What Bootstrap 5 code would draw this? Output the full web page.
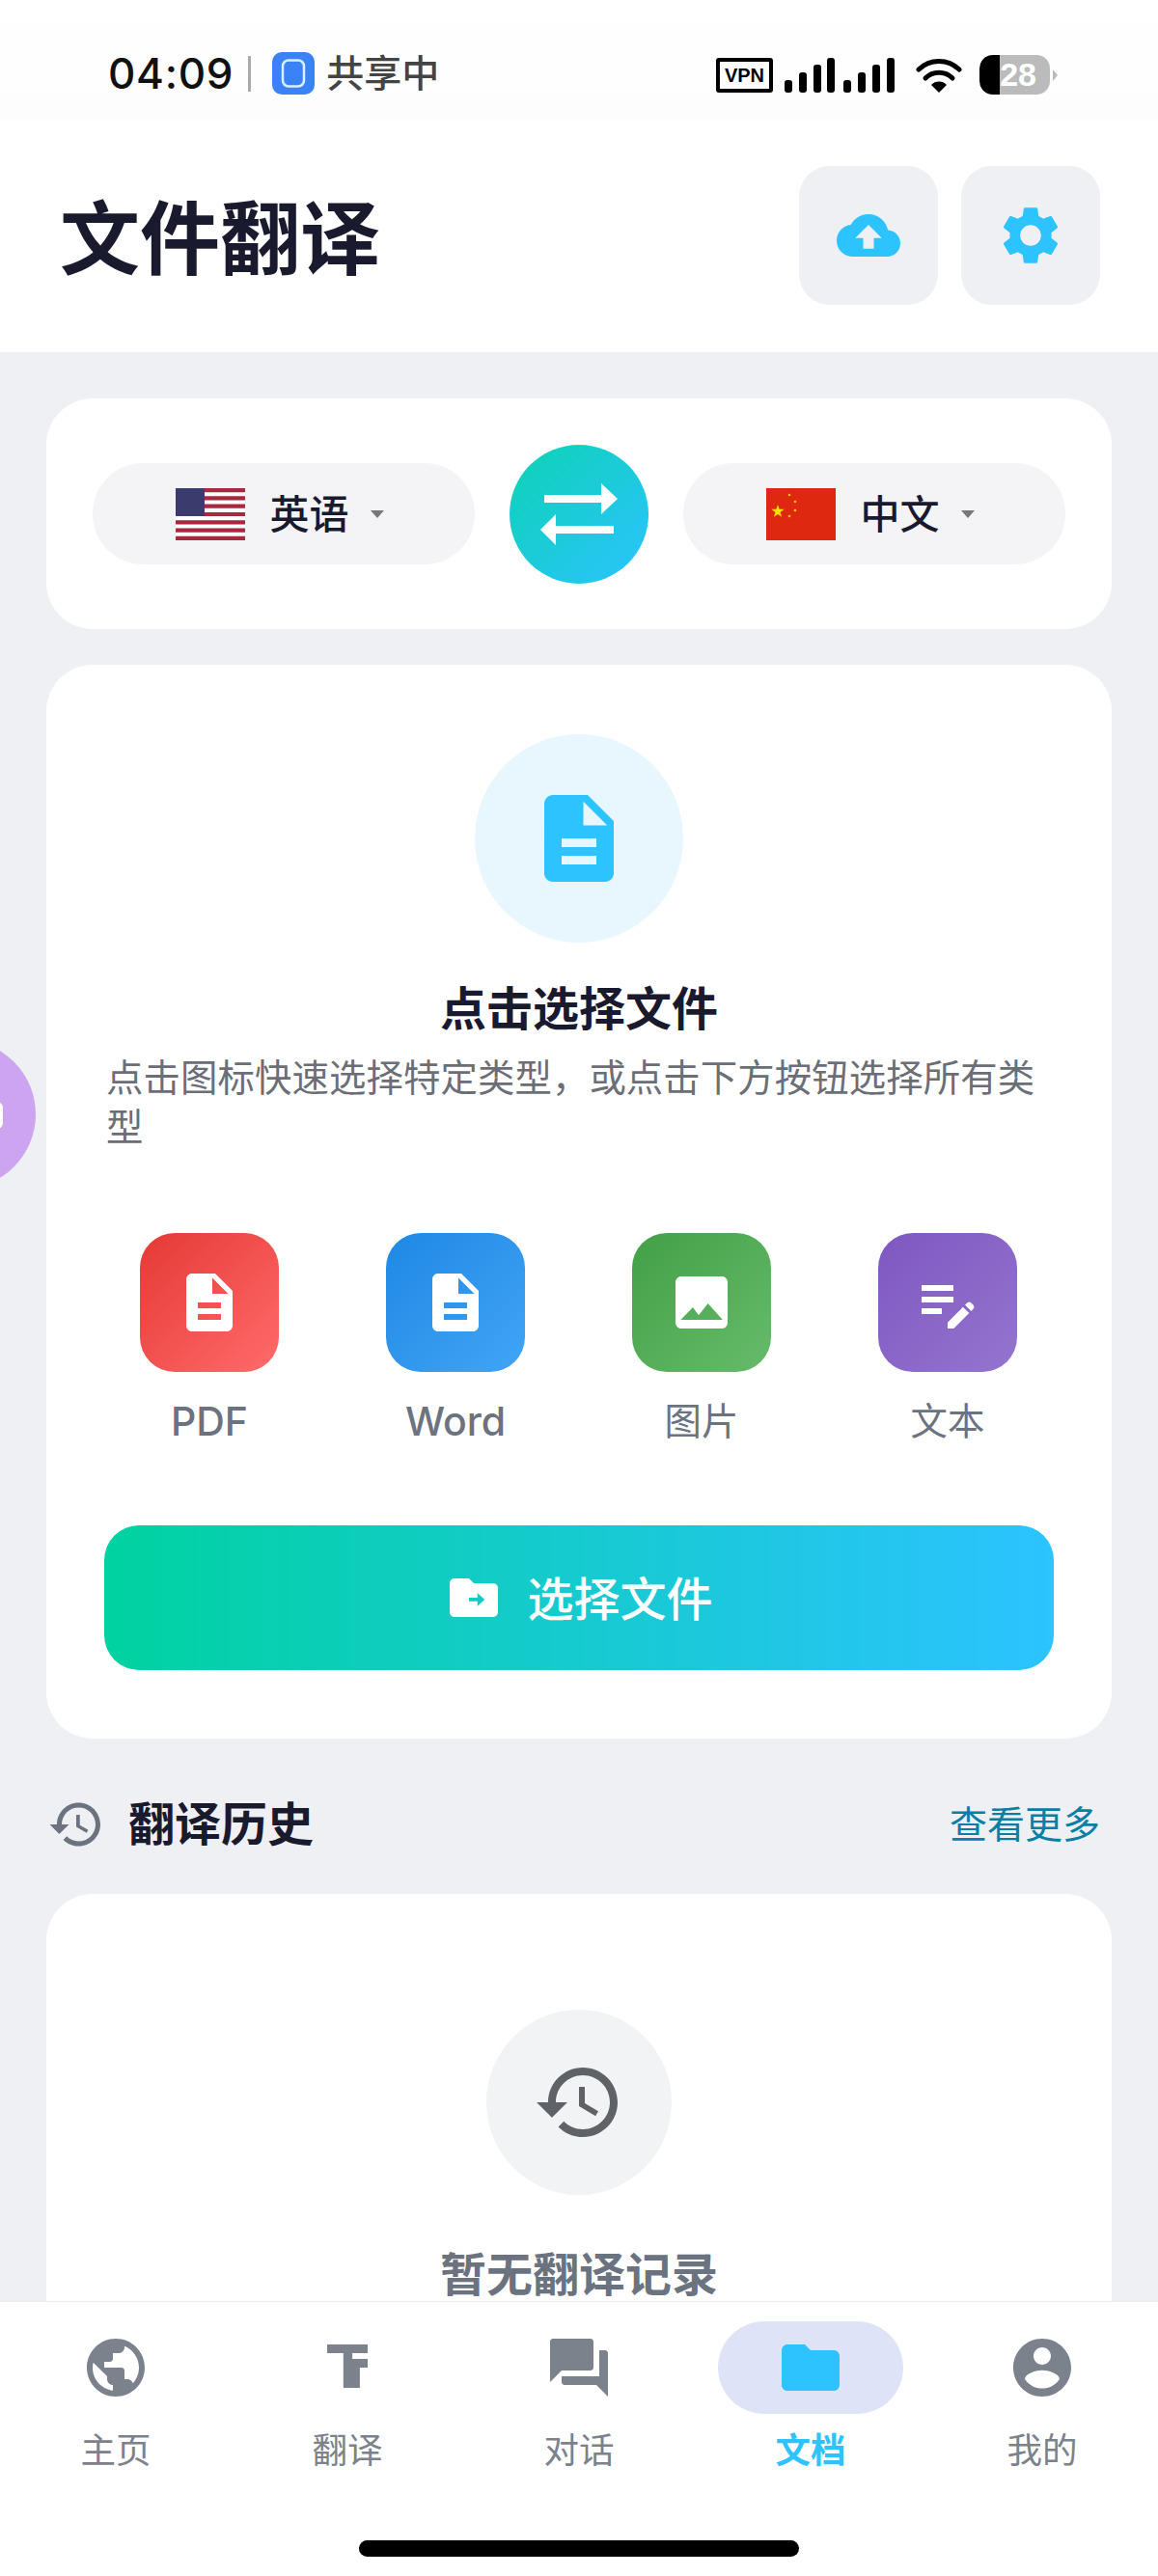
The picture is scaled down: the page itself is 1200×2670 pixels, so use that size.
<!DOCTYPE html>
<html lang="zh">
  <head>
    <meta charset="UTF-8" />
    <title>文件翻译</title>
    <link rel="stylesheet" href="https://cdn.jsdelivr.net/npm/bootstrap@5.3.3/dist/css/bootstrap.min.css" />
    <script src="https://cdn.jsdelivr.net/npm/bootstrap@5.3.3/dist/js/bootstrap.bundle.min.js"></script>
    <style>
      html { overflow: hidden; }
      body {
        width: 1200px;
        height: 2670px;
        overflow: hidden;
        background: #eef0f4;
        font-family: Inter, Roboto, "Noto Sans CJK SC", sans-serif;
        color: #1a1a2e;
      }
      svg { display: block; flex: none; fill: currentColor; }
      .status-bar { height: 124px; padding: 54px 104px 0 112px; background: linear-gradient(#fff, #fdfdfd); color: #000; }
      .status-right { margin-top: 3px; }
      .status-time { font-size: 44px; line-height: 44px; font-weight: 500; color: #111; letter-spacing: .7px; }
      .status-sep { width: 3px; height: 37px; background: #aaa; margin: 0 22px 0 15px; }
      .status-share { font-size: 39px; line-height: 44px; color: #444; margin-left: 12px; font-weight: 500; }
      .vpn-box { width: 59px; height: 36px; border: 4px solid #000; border-radius: 3px; font: 700 20px/28px "Liberation Sans", sans-serif; text-align: center; }
      .signal-bars { margin-left: 12px; }
      .wifi-mark { margin-left: 22px; }
      .batt-wrap { margin-left: 18px; }
      .batt-box { width: 73px; height: 41px; border-radius: 14px; background: linear-gradient(90deg, #000 0 29%, #bbb 29%); color: #fff; font: 700 34px/41px "Liberation Sans", sans-serif; text-align: right; padding-right: 14px; }
      .batt-nub { width: 0; height: 0; border-left: 5px solid #bbb; border-top: 6px solid transparent; border-bottom: 6px solid transparent; margin-left: 3px; }

      .page-head { height: 241px; background: #fff; padding: 48px 60px 0 62px; }
      .page-title { font-size: 83px; line-height: 152px; font-weight: 700; margin: 0; }
      .head-btn { width: 144px; height: 144px; border-radius: 32px; background: #eef0f4; color: #2cc3ff; }

      .sheet { background: #fff; border-radius: 48px; margin: 0 48px; }
      .lang-sheet { height: 239px; margin-top: 48px; padding: 0 48px; gap: 36px; }
      .lang-pill { width: 396px; height: 105px; border-radius: 52px; background: #f4f4f6; font-size: 41px; font-weight: 500; padding-right: 9px; }
      .lang-flag { margin-right: 26px; }
      .lang-name { padding-top: 2px; }
      .lang-caret { width: 0; height: 0; border-left: 7px solid transparent; border-right: 7px solid transparent; border-top: 8px solid #777; margin-left: 22px; }
      .swap-btn { width: 144px; height: 144px; border-radius: 50%; background: linear-gradient(135deg, #0cd3b4, #2cc3ff); color: #fff; }

      .pick-sheet { margin-top: 37px; height: 1113px; padding: 72px 60px 0; }
      .pick-circle { width: 216px; height: 216px; border-radius: 50%; background: #e8f7fd; color: #2cc3ff; margin: 0 auto; }
      .pick-title { font-size: 48px; line-height: 60px; font-weight: 600; text-align: center; margin: 39px 0 0; }
      .pick-desc { font-size: 38.4px; line-height: 51px; color: #6b6e76; margin: 16px 0 0 2px; letter-spacing: .1px; }
      .type-row { margin-top: 84px; padding: 0 38px 0 37px; }
      .type-item { width: 144px; }
      .type-tile { width: 144px; height: 144px; border-radius: 36px; color: #fff; }
      .tile-red { background: linear-gradient(135deg, #e53935, #ff6b6b); }
      .tile-blue { background: linear-gradient(135deg, #1e88e5, #42a5f5); }
      .tile-green { background: linear-gradient(135deg, #43a047, #66bb6a); }
      .tile-purple { background: linear-gradient(135deg, #7e57c2, #9575cd); }
      .type-label { font-size: 38.4px; line-height: 52px; color: #6b7280; margin-top: 25px; white-space: nowrap; }
      .type-label-latin { font-size: 41px; font-weight: 500; }
      .pick-btn { width: 984px; height: 150px; border: 0; border-radius: 36px; margin: 82px 0 0 0; background: linear-gradient(90deg, #00d2a0, #2cc3ff); color: #fff; font-size: 48px; font-weight: 500; gap: 25px; }
      .pick-btn:hover { color: #fff; background: linear-gradient(90deg, #00d2a0, #2cc3ff); }
      .pick-btn-text { padding-top: 3px; }

      .hist-head { margin: 59px 60px 0 49px; height: 60px; }
      .hist-icon { color: #6b7280; }
      .hist-title { font-size: 48px; font-weight: 600; line-height: 60px; margin: 0 0 0 24px; }
      .hist-more { font-size: 39px; color: #0a7ea4; text-decoration: none; }
      .empty-sheet { margin-top: 42px; height: 700px; padding-top: 120px; }
      .empty-circle { width: 192px; height: 192px; border-radius: 50%; background: #f1f3f5; color: #5f6368; margin: 0 auto; }
      .empty-text { font-size: 48px; font-weight: 600; color: #6b7280; text-align: center; line-height: 60px; margin: 53px 0 0; }

      .tab-bar { position: fixed; left: 0; right: 0; bottom: 0; height: 285px; background: #fff; border-top: 1px solid #e9eaec; padding-top: 20px; }
      .tab-cell { width: 240px; color: #7b828c; }
      .tab-pill { width: 192px; height: 96px; border-radius: 48px; }
      .tab-cell.is-on { color: #2cc3ff; font-weight: 700; }
      .is-on .tab-pill { background: #dfe3f7; }
      .tab-text { font-size: 36.5px; line-height: 46px; margin-top: 15px; }
      .home-bar { position: absolute; left: 372px; bottom: 20px; width: 456px; height: 17px; border-radius: 9px; background: #000; }
      .float-ball { position: fixed; left: -117px; top: 1078px; width: 154px; height: 154px; border-radius: 50%; background: #cda4f0; }
      .float-glyph { position: absolute; right: 34px; top: 64px; width: 30px; height: 28px; border-radius: 6px; background: #fff; }
    </style>
  </head>
  <body>
    <div class="status-bar d-flex align-items-start justify-content-between">
      <div class="d-flex align-items-center">
        <span class="status-time">04:09</span>
        <span class="status-sep"></span>
        <svg width="44" height="44" viewBox="0 0 44 44"><rect width="44" height="44" rx="10" fill="#3b82f6"/><rect x="11" y="8.500" width="22" height="27" rx="6" fill="#3b82f6" stroke="#d8f0ff" stroke-width="2.500"/></svg>
        <span class="status-share">共享中</span>
      </div>
      <div class="status-right d-flex align-items-center">
        <div class="vpn-box">VPN</div>
        <svg class="signal-bars" width="114" height="36" viewBox="0 0 114 36"><rect x="0" y="23" width="8" height="13" rx="3"/><rect x="15" y="15" width="8" height="21" rx="3"/><rect x="30" y="7" width="8" height="29" rx="3"/><rect x="44" y="0" width="8" height="36" rx="3"/><rect x="61" y="23" width="8" height="13" rx="3"/><rect x="76" y="15" width="8" height="21" rx="3"/><rect x="91" y="7" width="8" height="29" rx="3"/><rect x="106" y="0" width="8" height="36" rx="3"/></svg>
        <svg class="wifi-mark" width="48" height="36" viewBox="0 0 48 36"><path d="M24 36l-8-8a11 11 0 0 1 16 0z"/><path d="M10 21a20 20 0 0 1 28 0" fill="none" stroke="#000" stroke-width="5" stroke-linecap="round"/><path d="M3 12a30 30 0 0 1 42 0" fill="none" stroke="#000" stroke-width="5" stroke-linecap="round"/></svg>
        <div class="batt-wrap d-flex align-items-center">
          <div class="batt-box">28</div>
          <div class="batt-nub"></div>
        </div>
      </div>
    </div>

    <header class="page-head d-flex justify-content-between align-items-start">
      <h1 class="page-title">文件翻译</h1>
      <div class="d-flex gap-4">
        <div class="head-btn d-flex align-items-center justify-content-center">
          <svg width="66" height="66" viewBox="0 0 24 24"><path d="M19.35 10.04C18.67 6.59 15.64 4 12 4 9.11 4 6.6 5.64 5.35 8.04 2.34 8.36 0 10.91 0 14c0 3.31 2.69 6 6 6h13c2.76 0 5-2.24 5-5 0-2.64-2.05-4.78-4.65-4.96zM14 13v4h-4v-4H7l5-5 5 5h-3z"/></svg>
        </div>
        <div class="head-btn d-flex align-items-center justify-content-center">
          <svg width="72" height="72" viewBox="0 0 24 24"><path d="M19.14 12.94c.04-.3.06-.61.06-.94 0-.32-.02-.64-.07-.94l2.03-1.58c.18-.14.23-.41.12-.61l-1.92-3.32c-.12-.22-.37-.29-.59-.22l-2.39.96c-.5-.38-1.03-.7-1.62-.94l-.36-2.54c-.04-.24-.24-.41-.48-.41h-3.84c-.24 0-.43.17-.47.41l-.36 2.54c-.59.24-1.13.57-1.62.94l-2.39-.96c-.22-.08-.47 0-.59.22L2.74 8.87c-.12.21-.08.47.12.61l2.03 1.58c-.05.3-.09.63-.09.94s.02.64.07.94l-2.03 1.58c-.18.14-.23.41-.12.61l1.92 3.32c.12.22.37.29.59.22l2.39-.96c.5.38 1.03.7 1.62.94l.36 2.54c.05.24.24.41.48.41h3.84c.24 0 .44-.17.47-.41l.36-2.54c.59-.24 1.13-.56 1.62-.94l2.39.96c.22.08.47 0 .59-.22l1.92-3.32c.12-.22.07-.47-.12-.61l-2.01-1.58zM12 15.6c-1.98 0-3.6-1.62-3.6-3.6s1.62-3.6 3.6-3.6 3.6 1.62 3.6 3.6-1.62 3.6-3.6 3.6z"/></svg>
        </div>
      </div>
    </header>

    <section class="sheet lang-sheet d-flex align-items-center">
      <div class="lang-pill d-flex align-items-center justify-content-center">
        <svg class="lang-flag" width="72" height="54" viewBox="0 0 72 54">
          <rect width="72" height="54" fill="#fff"/>
          <path d="M0 0h72v4.200H0zM0 8.300h72v4.200H0zM0 16.600h72v4.200H0zM0 24.900h72v4.200H0zM0 33.200h72v4.200H0zM0 41.500h72v4.200H0zM0 49.800h72V54H0z" fill="#a8283e"/>
          <rect width="30" height="29" fill="#3c3b6e"/>
        </svg>
        <span class="lang-name">英语</span><span class="lang-caret"></span>
      </div>
      <button class="swap-btn btn p-0 d-flex align-items-center justify-content-center">
        <svg width="80" height="64" viewBox="0 0 80 64"><path d="M4 12h59V0l17 16-17 16V20H4z"/><path d="M76 44H16V32L0 48l16 16V52h60z"/></svg>
      </button>
      <div class="lang-pill d-flex align-items-center justify-content-center">
        <svg class="lang-flag" width="72" height="54" viewBox="0 0 72 54">
          <rect width="72" height="54" fill="#de2910"/>
          <polygon points="12,17 13.600,21.800 18.700,21.800 14.500,25 16.100,29.700 12,26.900 7.900,29.700 9.500,25 5.300,21.800 10.400,21.800" fill="#ffde00"/>
          <g fill="#ffc400"><circle cx="24" cy="7" r="1.300"/><circle cx="30" cy="14" r="1.300"/><circle cx="30" cy="23" r="1.300"/><circle cx="24" cy="29" r="1.300"/></g>
        </svg>
        <span class="lang-name">中文</span><span class="lang-caret"></span>
      </div>
    </section>

    <section class="sheet pick-sheet">
      <div class="pick-circle d-flex align-items-center justify-content-center">
        <svg width="108" height="108" viewBox="0 0 24 24"><path d="M14 2H6c-1.100 0-1.990.9-1.990 2L4 20c0 1.100.89 2 1.990 2H18c1.100 0 2-.9 2-2V8l-6-6zm2 16H8v-2h8v2zm0-4H8v-2h8v2zm-3-5V3.500L18.500 9H13z"/></svg>
      </div>
      <h2 class="pick-title">点击选择文件</h2>
      <p class="pick-desc">点击图标快速选择特定类型，或点击下方按钮选择所有类型</p>
      <div class="type-row d-flex justify-content-between">
        <div class="type-item d-flex flex-column align-items-center">
          <div class="type-tile tile-red d-flex align-items-center justify-content-center">
            <svg width="72" height="72" viewBox="0 0 24 24"><path d="M14 2H6c-1.100 0-1.990.9-1.990 2L4 20c0 1.100.89 2 1.990 2H18c1.100 0 2-.9 2-2V8l-6-6zm2 16H8v-2h8v2zm0-4H8v-2h8v2zm-3-5V3.500L18.500 9H13z"/></svg>
          </div>
          <span class="type-label type-label-latin">PDF</span>
        </div>
        <div class="type-item d-flex flex-column align-items-center">
          <div class="type-tile tile-blue d-flex align-items-center justify-content-center">
            <svg width="72" height="72" viewBox="0 0 24 24"><path d="M14 2H6c-1.100 0-1.990.9-1.990 2L4 20c0 1.100.89 2 1.990 2H18c1.100 0 2-.9 2-2V8l-6-6zm2 16H8v-2h8v2zm0-4H8v-2h8v2zm-3-5V3.500L18.500 9H13z"/></svg>
          </div>
          <span class="type-label type-label-latin">Word</span>
        </div>
        <div class="type-item d-flex flex-column align-items-center">
          <div class="type-tile tile-green d-flex align-items-center justify-content-center">
            <svg width="72" height="72" viewBox="0 0 24 24"><path fill-rule="evenodd" d="M5 3h14c1.100 0 2 .9 2 2v14c0 1.100-.9 2-2 2H5c-1.100 0-2-.9-2-2V5c0-1.100.9-2 2-2zM4.800 18L9 13.700l2 2.700 3.200-4.100 5.100 5.700z"/></svg>
          </div>
          <span class="type-label">图片</span>
        </div>
        <div class="type-item d-flex flex-column align-items-center">
          <div class="type-tile tile-purple d-flex align-items-center justify-content-center">
            <svg width="72" height="72" viewBox="0 0 24 24"><path d="M3 10h11v2H3zM3 6h11v2H3zM3 14h7v2H3zM18.010 12.870l.71-.71c.39-.39 1.020-.39 1.410 0l.71.71c.39.39.39 1.020 0 1.410l-.71.71zM17.300 13.580l-5.300 5.300V21h2.120l5.300-5.300z"/></svg>
          </div>
          <span class="type-label">文本</span>
        </div>
      </div>
      <button class="pick-btn btn d-flex align-items-center justify-content-center">
        <svg width="60" height="60" viewBox="0 0 24 24"><path fill-rule="evenodd" d="M20 6h-8l-2-2H4c-1.100 0-1.990.9-1.990 2L2 18c0 1.100.9 2 2 2h16c1.100 0 2-.9 2-2V8c0-1.100-.9-2-2-2zm-6.500 9.500v-2h-3.500v-1.500h3.500v-2l3 2.750z"/></svg>
        <span class="pick-btn-text">选择文件</span>
      </button>
    </section>

    <div class="hist-head d-flex align-items-center justify-content-between">
      <div class="d-flex align-items-center">
        <svg class="hist-icon" width="60" height="60" viewBox="0 0 24 24"><path d="M13 3c-4.970 0-9 4.030-9 9H1l3.890 3.890.07.14L9 12H6c0-3.870 3.130-7 7-7s7 3.130 7 7-3.130 7-7 7c-1.930 0-3.680-.79-4.940-2.060l-1.420 1.420C8.270 19.990 10.510 21 13 21c4.970 0 9-4.030 9-9s-4.030-9-9-9zm-1 5v5l4.280 2.540.72-1.210-3.500-2.080V8H12z"/></svg>
        <h3 class="hist-title">翻译历史</h3>
      </div>
      <a class="hist-more" href="#">查看更多</a>
    </div>

    <section class="sheet empty-sheet">
      <div class="empty-circle d-flex align-items-center justify-content-center">
        <svg width="96" height="96" viewBox="0 0 24 24"><path d="M13 3c-4.970 0-9 4.030-9 9H1l3.890 3.890.07.14L9 12H6c0-3.870 3.130-7 7-7s7 3.130 7 7-3.130 7-7 7c-1.930 0-3.680-.79-4.940-2.060l-1.420 1.420C8.270 19.990 10.510 21 13 21c4.970 0 9-4.030 9-9s-4.030-9-9-9zm-1 5v5l4.280 2.540.72-1.210-3.500-2.080V8H12z"/></svg>
      </div>
      <p class="empty-text">暂无翻译记录</p>
    </section>

    <div class="float-ball"><span class="float-glyph"></span></div>

    <nav class="tab-bar d-flex align-items-start">
      <div class="tab-cell d-flex flex-column align-items-center">
        <div class="tab-pill d-flex align-items-center justify-content-center">
          <svg width="72" height="72" viewBox="0 0 24 24"><path d="M12 2C6.480 2 2 6.480 2 12s4.480 10 10 10 10-4.480 10-10S17.520 2 12 2zm-1 17.930c-3.950-.49-7-3.850-7-7.930 0-.62.08-1.210.21-1.790L9 15v1c0 1.100.9 2 2 2v1.930zm6.900-2.540c-.26-.81-1-1.390-1.900-1.390h-1v-3c0-.55-.45-1-1-1H8v-2h2c.55 0 1-.45 1-1V7h2c1.100 0 2-.9 2-2v-.41c2.930 1.190 5 4.060 5 7.410 0 2.080-.8 3.970-2.100 5.390z"/></svg>
        </div>
        <span class="tab-text">主页</span>
      </div>
      <div class="tab-cell d-flex flex-column align-items-center">
        <div class="tab-pill d-flex align-items-center justify-content-center">
          <svg width="72" height="72" viewBox="0 0 24 24"><path d="M5 4h14v3h-5.300v2H19v3h-2.700v7h-5.700V7H5z"/></svg>
        </div>
        <span class="tab-text">翻译</span>
      </div>
      <div class="tab-cell d-flex flex-column align-items-center">
        <div class="tab-pill d-flex align-items-center justify-content-center">
          <svg width="72" height="72" viewBox="0 0 24 24"><path d="M21 6h-2v9H6v2c0 .55.45 1 1 1h11l4 4V7c0-.55-.45-1-1-1zm-4 6V3c0-.55-.45-1-1-1H3c-.55 0-1 .45-1 1v14l4-4h10c.55 0 1-.45 1-1z"/></svg>
        </div>
        <span class="tab-text">对话</span>
      </div>
      <div class="tab-cell is-on d-flex flex-column align-items-center">
        <div class="tab-pill d-flex align-items-center justify-content-center">
          <svg width="72" height="72" viewBox="0 0 24 24"><path d="M10 4H4c-1.100 0-1.990.9-1.990 2L2 18c0 1.100.9 2 2 2h16c1.100 0 2-.9 2-2V8c0-1.100-.9-2-2-2h-8l-2-2z"/></svg>
        </div>
        <span class="tab-text">文档</span>
      </div>
      <div class="tab-cell d-flex flex-column align-items-center">
        <div class="tab-pill d-flex align-items-center justify-content-center">
          <svg width="72" height="72" viewBox="0 0 24 24"><path d="M12 2C6.480 2 2 6.480 2 12s4.480 10 10 10 10-4.480 10-10S17.520 2 12 2zm0 3c1.660 0 3 1.340 3 3s-1.340 3-3 3-3-1.340-3-3 1.340-3 3-3zm0 14.200c-2.500 0-4.710-1.280-6-3.220.03-1.990 4-3.080 6-3.080 1.990 0 5.970 1.090 6 3.080-1.290 1.940-3.500 3.220-6 3.220z"/></svg>
        </div>
        <span class="tab-text">我的</span>
      </div>
      <div class="home-bar"></div>
    </nav>
  </body>
</html>
